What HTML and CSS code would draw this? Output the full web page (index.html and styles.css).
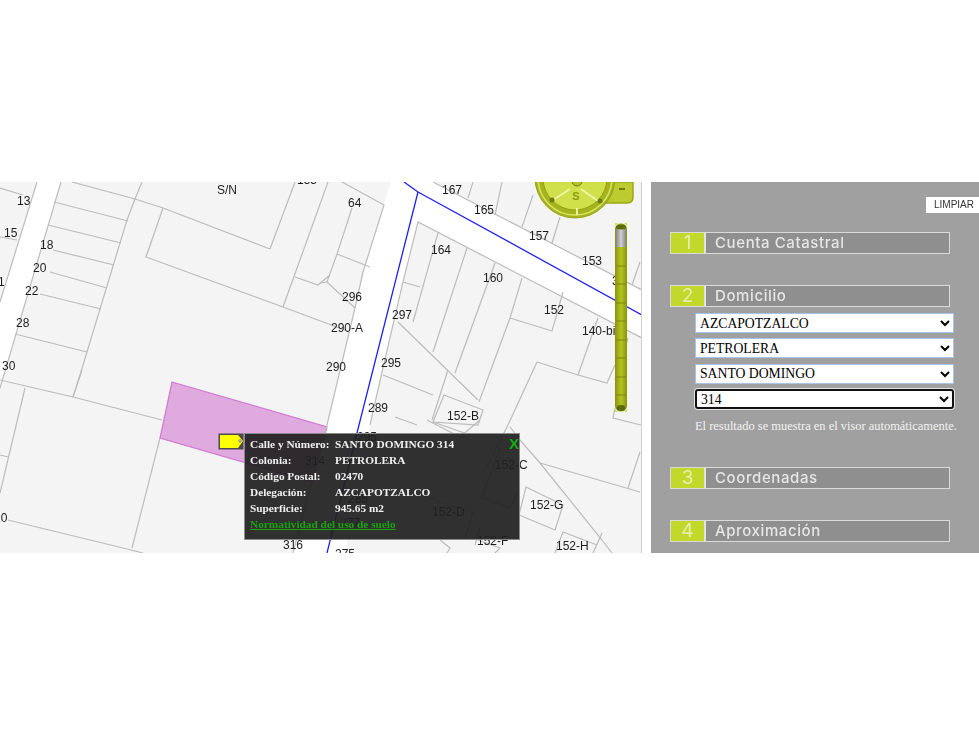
FILE: index.html
```html
<!DOCTYPE html>
<html lang="es">
<head>
<meta charset="utf-8">
<title>Visor catastral</title>
<link rel="stylesheet" href="styles.css">
</head>
<body>
<main class="viewer">
  <section class="map">
    <svg class="map-canvas" viewBox="0 0 641 371" width="641" height="371">
      <defs>
        <linearGradient id="sliderFill" x1="0" x2="1" y1="0" y2="0">
          <stop offset="0" stop-color="#8a9a0c"/>
          <stop offset="0.5" stop-color="#b4c420"/>
          <stop offset="1" stop-color="#8a9a0c"/>
        </linearGradient>
        <linearGradient id="thumbFill" x1="0" x2="1" y1="0" y2="0">
          <stop offset="0" stop-color="#858585"/>
          <stop offset="0.5" stop-color="#d0d0d0"/>
          <stop offset="1" stop-color="#858585"/>
        </linearGradient>
      </defs>
      <g transform="translate(0 -182)">
        <g class="roads">
          <polygon points="37,182 61,182 0,388 0,302"/>
          <polygon points="391,182 405,182 418,192 418,222 370,425 345,553 293,553 327,425 363,272"/>
          <polygon points="404,182 433,182 642,290 642,338 418,222"/>
        </g>
        <polygon class="parcel" points="172,382 327,427 312,482 160,438"/>
        <g class="lots">
          <polyline points="72,182 135,199 163,208 270,249"/>
          <polyline points="142,182 135,199 127,220 80,375 73,397"/>
          <line x1="54" y1="202" x2="128" y2="221"/>
          <line x1="48" y1="225" x2="121" y2="243"/>
          <line x1="53" y1="250" x2="114" y2="265"/>
          <line x1="50" y1="272" x2="107" y2="288"/>
          <line x1="40" y1="294" x2="101" y2="309"/>
          <line x1="15" y1="334" x2="87" y2="352"/>
          <line x1="61" y1="182" x2="0" y2="388"/>
          <line x1="37" y1="182" x2="0" y2="302"/>
          <line x1="0" y1="188" x2="23" y2="195"/>
          <line x1="0" y1="237" x2="17" y2="240"/>
          <polyline points="163,208 146,257 283,307 350,332"/>
          <line x1="295" y1="182" x2="270" y2="249"/>
          <line x1="328" y1="182" x2="283" y2="307"/>
          <polyline points="295,277 318,285 330,275"/>
          <polyline points="0,380 73,397 162,420"/>
          <line x1="82" y1="370" x2="73" y2="397"/>
          <line x1="25" y1="388" x2="0" y2="493"/>
          <line x1="0" y1="455" x2="8" y2="457"/>
          <polyline points="8,520 123,548 143,553"/>
          <line x1="160" y1="438" x2="132" y2="548"/>
          <polyline points="342,182 384,205 363,272 355,308"/>
          <line x1="337" y1="254" x2="370" y2="267"/>
          <polyline points="352,208 337,254 327,282 320,283"/>
          <line x1="327" y1="282" x2="355" y2="308"/>
          <polyline points="355,308 327,425 293,553"/>
          <polyline points="433,182 642,290"/>
          <polyline points="642,338 418,222 403,282 382,372 370,425"/>
          <line x1="403" y1="282" x2="420" y2="287"/>
          <line x1="438" y1="233" x2="413" y2="322"/>
          <line x1="467" y1="248" x2="433" y2="352"/>
          <line x1="495" y1="263" x2="455" y2="373"/>
          <polyline points="522,278 510,318 479,402"/>
          <polyline points="510,318 552,331 563,292"/>
          <line x1="398" y1="322" x2="478" y2="400"/>
          <line x1="448" y1="370" x2="432" y2="420"/>
          <line x1="383" y1="375" x2="433" y2="395"/>
          <polygon points="444,395 483,410 478,425 433,422"/>
          <line x1="433" y1="422" x2="470" y2="435"/>
          <line x1="537" y1="362" x2="508" y2="425"/>
          <polyline points="508,425 485,470"/>
          <polyline points="537,362 578,375 607,383 615,365"/>
          <line x1="598" y1="318" x2="578" y2="375"/>
          <line x1="628" y1="338" x2="615" y2="380"/>
          <line x1="473" y1="182" x2="468" y2="198"/>
          <line x1="502" y1="182" x2="495" y2="215"/>
          <line x1="533" y1="195" x2="522" y2="227"/>
          <line x1="560" y1="217" x2="552" y2="243"/>
          <line x1="640" y1="262" x2="632" y2="285"/>
          <polyline points="615,408 613,418 641,425"/>
          <line x1="395" y1="417" x2="417" y2="425"/>
          <line x1="540" y1="463" x2="640" y2="492"/>
          <line x1="640" y1="452" x2="628" y2="488"/>
          <polyline points="510,427 520,440 540,463 602,540 612,553"/>
          <polygon points="526,487 563,505 555,530 519,515"/>
          <polyline points="597,545 563,532 555,553"/>
          <line x1="602" y1="533" x2="593" y2="553"/>
          <polyline points="427,420 460,437 480,420"/>
          <polyline points="500,448 482,498 510,508 519,490"/>
          <polyline points="420,495 473,513 465,538"/>
          <line x1="480" y1="527" x2="475" y2="545"/>
          <polyline points="440,540 450,548 447,553"/>
          <polyline points="478,540 500,548 495,553"/>
        </g>
        <polyline class="street" points="404,182 418,192 642,315"/>
        <polyline class="street" points="418,192 359,425 327,553"/>
        <g class="labels">
          <text x="17" y="205">13</text><text x="4" y="237">15</text><text x="40" y="249">18</text>
          <text x="33" y="272">20</text><text x="25" y="295">22</text><text x="16" y="327">28</text>
          <text x="-2" y="286">1</text><text x="2" y="370">30</text><text x="-6" y="522">10</text>
          <text x="217" y="194">S/N</text><text x="348" y="207">64</text><text x="342" y="301">296</text>
          <text x="331" y="332">290-A</text><text x="326" y="371">290</text><text x="392" y="319">297</text>
          <text x="381" y="367">295</text><text x="368" y="412">289</text><text x="442" y="194">167</text>
          <text x="474" y="214">165</text><text x="529" y="240">157</text><text x="582" y="265">153</text>
          <text x="612" y="285">3</text><text x="431" y="254">164</text><text x="483" y="282">160</text>
          <text x="544" y="314">152</text><text x="582" y="335">140-bis</text><text x="447" y="420">152-B</text>
          <text x="305" y="465">314</text><text x="283" y="549">316</text><text x="495" y="469">152-C</text>
          <text x="432" y="516">152-D</text><text x="530" y="509">152-G</text><text x="477" y="545">152-F</text>
          <text x="556" y="550">152-H</text><text x="357" y="441">295</text><text x="348" y="503">285</text>
          <text x="340" y="527">277</text><text x="335" y="558">275</text><text x="297" y="184">155</text>
          <text x="62" y="182">12</text>
        </g>
        <!-- compass -->
        <g class="zoom-tab">
          <path d="M600 182 H633 V197 Q633 203 627 203 H604 Z"/>
          <line class="minus" x1="619" y1="189" x2="625" y2="189"/>
        </g>
        <g class="compass">
          <circle class="ring" cx="575" cy="178" r="40"/>
          <circle class="ring-line" cx="575" cy="178" r="37"/>
          <circle class="face" cx="575" cy="178" r="32"/>
          <line class="spoke" x1="570" y1="189" x2="553" y2="200"/>
          <line class="spoke" x1="581" y1="189" x2="598" y2="201"/>
          <line class="spoke" x1="577" y1="208" x2="577" y2="215"/>
          <circle class="stud" cx="552" cy="200" r="2.5"/>
          <circle class="stud" cx="600" cy="201" r="2.5"/>
          <circle class="hub" cx="577" cy="181" r="5"/>
          <text class="compass-s" x="576" y="200">S</text>
        </g>
        <!-- zoom slider -->
        <g class="slider">
          <path class="slider-tip" d="M615 223 h3 l-3 3 Z M627 223 h-3 l3 3 Z M615 412 h3 l-3 -3 Z M627 412 h-3 l3 -3 Z"/>
          <rect class="slider-body" x="615.5" y="224" width="11" height="187" rx="5"/>
          <rect class="slider-thumb" x="616" y="228" width="10" height="19"/>
          <g class="slider-ticks">
            <line x1="616" y1="266" x2="626" y2="266"/><line x1="616" y1="284" x2="626" y2="284"/>
            <line x1="616" y1="303" x2="626" y2="303"/><line x1="616" y1="321" x2="626" y2="321"/>
            <line x1="616" y1="340" x2="626" y2="340"/><line x1="616" y1="358" x2="626" y2="358"/>
            <line x1="616" y1="377" x2="626" y2="377"/><line x1="616" y1="395" x2="626" y2="395"/>
          </g>
          <ellipse class="slider-end" cx="621" cy="227" rx="5" ry="2.5"/>
          <ellipse class="slider-end" cx="621" cy="408" rx="4.5" ry="3"/>
        </g>
        <!-- marker -->
        <g class="marker">
          <rect x="218.5" y="433.5" width="25" height="16"/>
          <path d="M220 435 H238 L243 441 L238 448 H220 Z"/>
          <circle cx="240" cy="441" r="1.3"/>
        </g>
      </g>
    </svg>
    <div class="popup">
      <a class="popup-close">X</a>
      <dl class="popup-grid">
        <dt>Calle y Número:</dt><dd>SANTO DOMINGO 314</dd>
        <dt>Colonia:</dt><dd>PETROLERA</dd>
        <dt>Código Postal:</dt><dd>02470</dd>
        <dt>Delegación:</dt><dd>AZCAPOTZALCO</dd>
        <dt>Superficie:</dt><dd>945.65 m2</dd>
      </dl>
      <a class="popup-link">Normatividad del uso de suelo</a>
    </div>
  </section>
  <aside class="panel">
    <button class="clear" type="button">LIMPIAR</button>
    <h2 class="step step-first"><span class="step-num">1</span><span class="step-label">Cuenta Catastral</span></h2>
    <h2 class="step step-second"><span class="step-num">2</span><span class="step-label">Domicilio</span></h2>
    <form class="fields">
      <select class="field"><option>AZCAPOTZALCO</option></select>
      <select class="field"><option>PETROLERA</option></select>
      <select class="field"><option>SANTO DOMINGO</option></select>
      <select class="field field-active"><option>314</option></select>
      <p class="hint">El resultado se muestra en el visor automáticamente.</p>
    </form>
    <h2 class="step step-third"><span class="step-num">3</span><span class="step-label">Coordenadas</span></h2>
    <h2 class="step step-fourth"><span class="step-num">4</span><span class="step-label">Aproximación</span></h2>
  </aside>
</main>
</body>
</html>
```
FILE: styles.css
```css
* { box-sizing: border-box; }
html, body { margin: 0; background: #fff; }
body { height: 734px; overflow: hidden; padding-top: 182px; }

.viewer { display: flex; height: 371px; overflow: hidden; }

/* Map */
.map { position: relative; width: 642px; flex: none; border-right: 1px solid #cfcfcf; background: #f4f4f4; overflow: hidden; }
.map-canvas { display: block; filter: blur(0.5px); }
.roads polygon { fill: #fff; }
.parcel { fill: #dfaade; stroke: #d278d2; stroke-width: 1.2; }
.lots polyline, .lots line, .lots polygon { fill: none; stroke: #bcbcbc; stroke-width: 1.2; }
.street { fill: none; stroke: #2222ee; stroke-width: 1.3; }
.labels text { font: 12px "Liberation Sans", Arial, sans-serif; fill: #1c1c1c; }

.zoom-tab path { fill: #bccb30; stroke: #9aa816; stroke-width: 1.5; }
.minus { stroke: #55600a; stroke-width: 1.5; }
.ring { fill: #a5b31c; stroke: #97a512; }
.ring-line { fill: none; stroke: #d6e565; stroke-width: 1.5; }
.face { fill: #cfe04b; stroke: #93a114; stroke-width: 1; }
.spoke { stroke: #eef6ae; stroke-width: 1.8; }
.stud { fill: #6f7b10; }
.hub { fill: #b4c32a; stroke: #6f7b10; }
.compass-s { font: 700 11px "Liberation Sans", Arial, sans-serif; fill: #8b9912; text-anchor: middle; }

.slider-tip { fill: #cfe04b; }
.slider-body { fill: url(#sliderFill); stroke: #8a9a0c; }
.slider-thumb { fill: url(#thumbFill); }
.slider-ticks line { stroke: #7a880a; stroke-width: 1; }
.slider-end { fill: #5f6b08; }

.marker rect { fill: #4a4a4a; }
.marker path { fill: #ffff00; }
.marker circle { fill: #ddd; stroke: #555; stroke-width: 0.6; }

/* Popup */
.popup { position: absolute; left: 244px; top: 251px; width: 276px; height: 107px; padding: 2px 5px; background: rgba(32, 32, 32, 0.93); border: 1px solid #8a8a8a; font: 700 11.3px/16px "Liberation Serif", "Times New Roman", serif; color: #f0f0f0; filter: blur(0.3px); }
.popup-grid { display: grid; grid-template-columns: 85px 1fr; margin: 0; }
.popup-grid dt, .popup-grid dd { margin: 0; }
.popup-link { display: block; color: #1aa30e; text-decoration: underline; }
.popup-close { position: absolute; right: 0; top: 1px; font: 700 15px/18px "Liberation Sans", Arial, sans-serif; color: #12b010; }

/* Panel */
.panel { width: 328px; flex: none; margin-left: 9px; background: #a0a0a0; display: flex; flex-direction: column; overflow: hidden; }
.clear { align-self: flex-end; height: 16px; width: 53px; margin: 15px 0 0; padding: 0 0 0 3px; border: 0; background: #fff; font: 10px/16px "Liberation Sans", Arial, sans-serif; color: #333; filter: blur(0.3px); }

.step { display: flex; width: 280px; height: 22px; margin: 0 0 0 19px; flex: none; border: 1.5px solid #dadada; font: 500 15px/19px Inter, "Open Sans", sans-serif; letter-spacing: 0.6px; color: #e6e6e6; background: #8f8f8f; filter: blur(0.4px); }
.step-first { margin-top: 19px; }
.step-second { margin-top: 31px; }
.step-third { margin-top: 31px; }
.step-fourth { margin-top: 31px; }
.step-num { width: 34px; flex: none; background: #c2d82a; border-right: 1.5px solid #e2e2e2; text-align: center; font-weight: 400; font-size: 19px; letter-spacing: 0; color: #e6efb0; }
.step-label { padding-left: 9px; border-left: 1px solid #e2e2e2; }

.fields { display: flex; flex-direction: column; gap: 5.33px; margin: 6px 0 0 44px; }
.field { display: block; width: 259px; height: 20px; margin: 0; padding: 0; border: 1px solid #a9c3e6; border-radius: 0; background-color: #fff; font: 13.7px "Liberation Serif", "Times New Roman", serif; color: #000; }
.field-active { border: 2px solid #111; border-radius: 3px; box-shadow: 0 0 0 1px #e4e4e4; }
.hint { margin: 2px 0 0; font: 12.45px/20px "Liberation Serif", "Times New Roman", serif; color: #f2f2f2; white-space: nowrap; }
```
